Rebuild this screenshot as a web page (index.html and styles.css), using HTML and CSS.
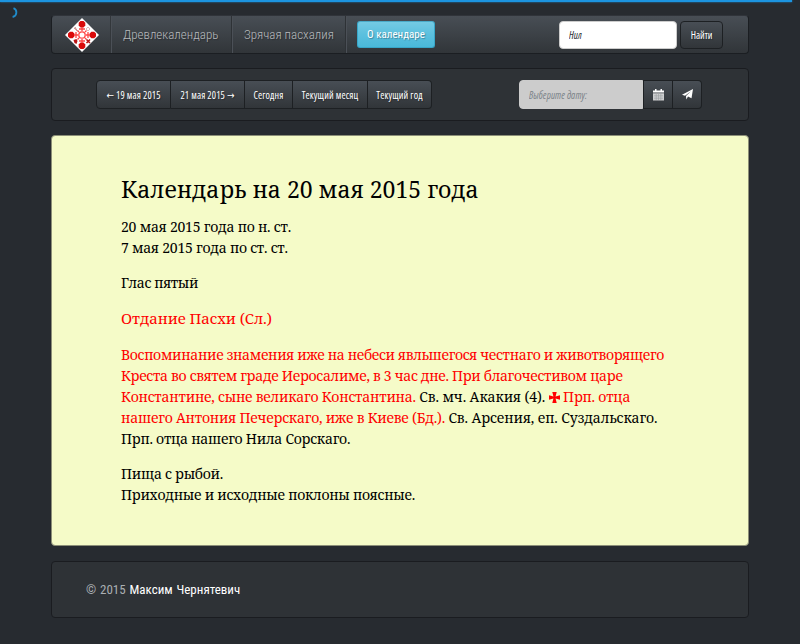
FILE: index.html
```html
<!DOCTYPE html>
<html lang="ru">
<head>
<meta charset="utf-8">
<title>Древлекалендарь</title>
<link rel="stylesheet" href="styles.css">
</head>
<body>
<div class="progress"></div>
<svg class="spinner" width="12" height="12" viewBox="0 0 12 12"><path d="M3.500 1.200A4.600 4.600 0 0 1 2.600 10" fill="none" stroke="#208bc9" stroke-width="1.800"/></svg>
<div class="container">
  <nav class="navbar">
    <a class="brand" href="#">
      <svg width="36" height="36" viewBox="-18 -18 36 36">
        <path d="M0-17L17 0 0 17-17 0z" fill="#fff"/>
        <g fill="#d90a0a">
          <path d="M-1.500-14h3l1.800 1.800v2.800l-1.800 1.800h-3l-1.800-1.800v-2.800z"/>
          <path d="M-1.500 7.600h3l1.800 1.800v2.800l-1.800 1.800h-3l-1.800-1.800v-2.800z"/>
          <path d="M-14-1.500v3l1.800 1.800h2.800l1.800-1.800v-3l-1.800-1.800h-2.800z"/>
          <path d="M14-1.500v3l-1.800 1.800h-2.800l-1.800-1.800v-3l1.800-1.800h2.800z"/>
        </g>
        <g fill="none" stroke="#f44" stroke-width="1.300">
          <circle r="3.200"/>
          <path d="M0-8v4M0 8V4M-8 0h4M8 0H4M-3-6h6M-3 6h6M-6-3v6M6-3v6M-4.500-4.500l1.500 1.500M4.500-4.500L3-3M-4.500 4.500L-3 3M4.500 4.500L3 3"/>
        </g>
        <path d="M-8.500 5l3-1 1 2-1 3-2-1z" fill="#b81414"/>
        <path d="M4.500 4.500l3.500 3.500M8 4.500L4.500 8" stroke="#b81414" stroke-width="1.600"/>
        <path d="M-8-7l4 3M-7-8l2 4" stroke="#c88" stroke-width="1"/>
        <path d="M4-6l2-2 2 2-2 2z" fill="none" stroke="#dbb" stroke-width="1"/>
      </svg>
    </a>
    <a class="nav-link first" href="#"><span>Древлекалендарь</span></a>
    <a class="nav-link second" href="#"><span>Зрячая пасхалия</span></a>
    <a class="about" href="#">О календаре</a>
    <form class="search">
      <input class="query" type="text" value="Нил">
      <button class="btn find" type="button">Найти</button>
    </form>
  </nav>

  <div class="toolbar">
    <div class="group">
      <button class="btn w75"><span class="arrow">←</span> 19 мая 2015</button>
      <button class="btn w74">21 мая 2015 <span class="arrow">→</span></button>
      <button class="btn w48">Сегодня</button>
      <button class="btn w75">Текущий месяц</button>
      <button class="btn w64">Текущий год</button>
    </div>
    <div class="group picker">
      <input class="date" type="text" placeholder="Выберите дату:">
      <button class="btn w30" aria-label="Календарь"><svg width="11" height="12" viewBox="0 0 11 12"><path fill="#fff" d="M0 1.500h2V0h1.500v1.500h4V0H9v1.500h2V3.500H0z"/><path fill="#fff" fill-opacity=".75" d="M0 4.300h11v7.200H0z"/><path stroke="#9a9da1" stroke-width=".6" d="M1 6.800h9M1 9.200h9M3.200 5v6M5.500 5v6M7.800 5v6"/></svg></button>
      <button class="btn w29" aria-label="Перейти"><svg width="11" height="11" viewBox="0 0 11 11"><path fill="#fff" d="M11 0L9.500 9.200 6 7.500 4.300 10.500 4 7 9 2.300 3 6.700 0 5.800z"/></svg></button>
    </div>
  </div>

  <main class="card">
    <h1>Календарь на 20 мая 2015 года</h1>
    <p>20 мая 2015 года по н. ст.<br><span class="l7">7 мая 2015 года по ст. ст.</span></p>
    <p class="tone">Глас пятый</p>
    <p class="feast">Отдание Пасхи (Сл.)</p>
    <p class="saints">
      <span class="red a">Воспоминание знамения иже на небеси явльшегося честнаго и животворящего</span><br>
      <span class="red b">Креста во святем граде Иеросалиме, в 3 час дне. При благочестивом царе</span><br>
      <span class="red c">Константине, сыне великаго Константина.</span> <span class="d">Св. мч. Акакия (4).</span>
      <svg class="cross" width="11" height="11" viewBox="0 0 10 10"><path fill="red" d="M3 0h4L6 4l4-1v4L6 6l1 4H3l1-4-4 1V3l4 1z"/></svg>
      <span class="red">Прп. отца</span><br>
      <span class="red e">нашего Антония Печерскаго, иже в Киеве (Бд.).</span> <span class="f">Св. Арсения, еп. Суздальскаго.</span><br>
      <span class="g">Прп. отца нашего Нила Сорскаго.</span>
    </p>
    <p><span class="h">Пища с рыбой.</span><br><span class="i">Приходные и исходные поклоны поясные.</span></p>
  </main>

  <footer class="footer">© 2015 <a href="#">Максим Чернятевич</a></footer>
</div>
</body>
</html>
```
FILE: styles.css
```css
* { box-sizing: border-box; }
body {
  margin: 0;
  height: 644px;
  overflow: hidden;
  background: #272b30;
  color: #c8c8c8;
  font-family: "Open Sans", "Liberation Sans", sans-serif;
}
a { text-decoration: none; }
.progress {
  position: absolute;
  top: 0;
  left: 0;
  width: 792px;
  height: 2px;
  background: #1c94e0;
  box-shadow: 0 0 2px #1c94e0;
}
.spinner { position: absolute; left: 10px; top: 7px; }
.container { width: 698px; margin-left: 51px; padding-top: 15px; }

.navbar {
  display: flex;
  align-items: center;
  height: 39px;
  margin-bottom: 14px;
  border: 1px solid #1b1e22;
  border-top-color: #30343a;
  border-radius: 4px;
  background: linear-gradient(#484e55, #3a3f44 60%, #313539);
}
.brand { display: flex; width: 60px; height: 37px; padding-left: 12px; align-items: center; border-right: 1px solid #4b5057; box-shadow: inset -1px 0 #33373b; }
.brand svg { flex: none; }
.nav-link {
  display: flex;
  align-items: center;
  height: 37px;
  padding-left: 11px;
  border-right: 1px solid #4b5057;
  box-shadow: inset -1px 0 #2e3236;
  color: #b8bbbe;
  font-family: Roboto, sans-serif;
  font-size: 13px;
  font-stretch: 75%;
  font-weight: 300;
  text-shadow: 1px 1px 1px rgba(0, 0, 0, .3);
  white-space: nowrap;
}
.first { width: 121px; }
.second { width: 114px; }
.about {
  width: 78px;
  height: 27px;
  margin-left: 10px;
  border: 1px solid #38a6c8;
  border-top-color: #4aaac8;
  border-radius: 3px;
  background: linear-gradient(#74cae3, #5bc0de 50%, #4ab9da);
  color: #fff;
  font-family: Roboto, sans-serif;
  font-size: 11px;
  font-stretch: 75%;
  line-height: 26px;
  text-align: center;
  text-shadow: 1px 1px 1px rgba(0, 0, 0, .3);
}
.search { display: flex; margin-left: auto; margin-right: 25px; }
input {
  border: 1px solid #ccc;
  padding: 0 9px;
  font: italic 10px "Open Sans", sans-serif;
  font-stretch: 75%;
}
.query { width: 118px; height: 28px; margin-right: 3px; border-radius: 4px; background: #fff; color: #272b30; font-weight: 500; }
.btn {
  height: 29px;
  margin: 0;
  padding: 0;
  border: 1px solid #1d2023;
  background: linear-gradient(#484e55, #3a3f44 60%, #313539);
  color: #fff;
  font: 10px "Open Sans", sans-serif;
  font-stretch: 75%;
  text-shadow: 1px 1px 1px rgba(0, 0, 0, .3);
  white-space: nowrap;
}
.find { width: 43px; height: 28px; border-radius: 4px; }

.toolbar {
  display: flex;
  justify-content: space-between;
  height: 53px;
  margin-bottom: 14px;
  padding: 11px 46px 0 44px;
  border: 1px solid #1a1c20;
  border-radius: 4px;
  background: #2e3236;
}
.group { display: flex; }
.group .btn + .btn { border-left-width: 0; }
.group .btn:first-child { border-radius: 4px 0 0 4px; }
.group .btn:last-child { border-radius: 0 4px 4px 0; }
.group .btn { letter-spacing: .13px; }
.arrow { font-family: "DejaVu Sans Condensed", "DejaVu Sans", sans-serif; }
.w75 { width: 75px; }
.w74 { width: 74px; }
.w48 { width: 48px; }
.w64 { width: 64px; }
.w30 { width: 30px; }
.w29 { width: 29px; }
.picker .btn { display: flex; align-items: center; justify-content: center; }
.date { width: 124px; height: 29px; border-radius: 4px 0 0 4px; background: #ccc; letter-spacing: .1px; }
.date::placeholder { color: #7a8288; opacity: 1; }

.card {
  height: 411px;
  margin-bottom: 15px;
  padding: 38px 69px 0;
  border: 1px solid #8c8f78;
  border-radius: 4px;
  background: #f5fbc8;
  color: #000;
  font: 14px/21px "Noto Serif", "Liberation Serif", serif;
  letter-spacing: -.22px;
  white-space: nowrap;
}
.card h1 { margin: 0 0 12px; font-size: 23px; font-weight: 400; line-height: 30px; letter-spacing: 0; }
.card p { margin: 0 0 14px; }
.card .feast { margin-bottom: 15px; color: red; font-size: 15px; line-height: 22px; letter-spacing: -.05px; }
.red { color: red; }
.l7 { letter-spacing: -.23px; }
.tone { letter-spacing: -.35px; }
.a { letter-spacing: -.32px; }
.b { letter-spacing: -.3px; }
.c { letter-spacing: -.22px; }
.d { letter-spacing: -.08px; }
.e { letter-spacing: -.21px; }
.f { letter-spacing: -.09px; }
.g { letter-spacing: -.25px; }
.h { letter-spacing: -.26px; }
.i { letter-spacing: -.25px; }
.cross { vertical-align: -1px; }

.footer {
  height: 57px;
  padding-left: 34px;
  border: 1px solid #1a1c20;
  border-radius: 4px;
  background: #2e3236;
  color: #aaafb3;
  font-family: Roboto, sans-serif;
  font-size: 13px;
  font-stretch: 75%;
  line-height: 56px;
  word-spacing: .8px;
}
.footer a { color: #fff; }
```
